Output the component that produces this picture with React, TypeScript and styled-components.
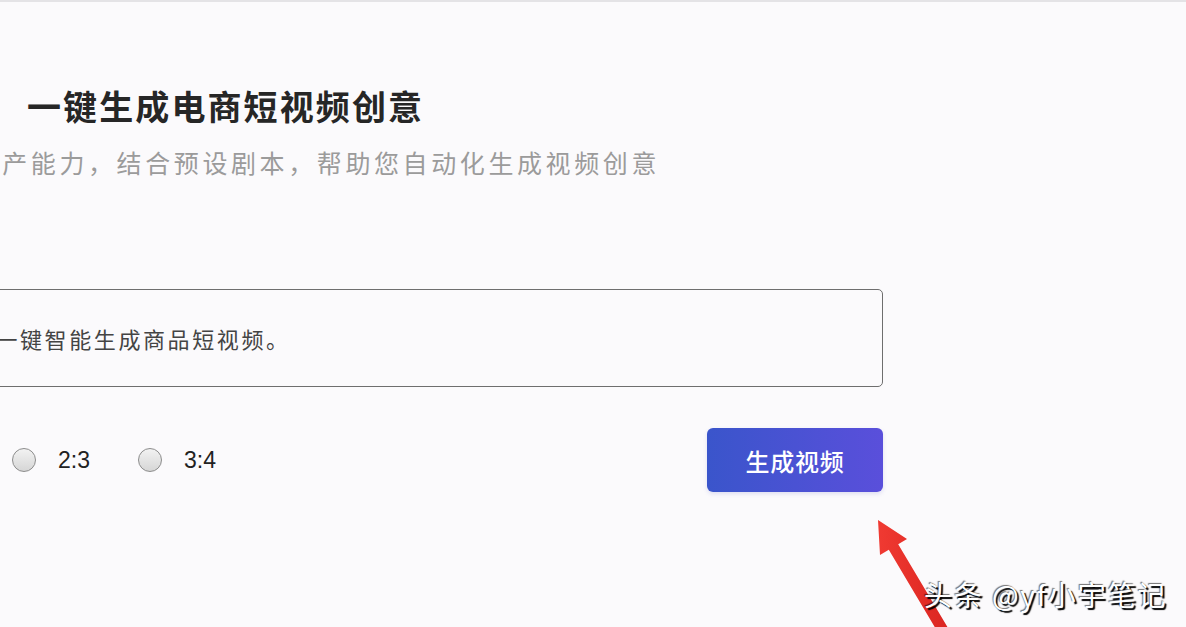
import React from "react";
import styled, { createGlobalStyle } from "styled-components";

const Global = createGlobalStyle`
  html, body { margin: 0; padding: 0; }
  body { font-family: "Liberation Sans", "Noto Sans CJK SC", sans-serif; }
`;

const Page = styled.div`
  position: relative;
  width: 100vw;
  height: 100vh;
  overflow: hidden;
  box-sizing: border-box;
  background: #fbfafc;
  border-top: 2px solid #e4e3e6;
`;

const Panel = styled.div`
  display: flex;
  flex-direction: column;
  margin-left: -260px;
  width: 1143px;
`;

const Title = styled.h1`
  margin: 83px 0 0 287px;
  font-family: "Noto Sans CJK SC", sans-serif;
  font-size: 34px;
  line-height: 41px;
  font-weight: 700;
  letter-spacing: 2.1px;
  color: #262626;
  white-space: nowrap;
`;

const Subtitle = styled.p`
  margin: 19px 0 0 62px;
  font-family: "Noto Sans CJK SC", sans-serif;
  font-size: 25px;
  line-height: 34px;
  letter-spacing: 3.6px;
  color: #9b9b9b;
  white-space: nowrap;
`;

const InputBox = styled.div`
  margin-top: 110px;
  height: 98px;
  box-sizing: border-box;
  border: 1px solid #6e6e6e;
  border-radius: 5px;
  display: flex;
  align-items: center;
  padding-left: 33px;
  font-family: "Noto Sans CJK SC", sans-serif;
  font-size: 22px;
  letter-spacing: 2.6px;
  color: #444;
  white-space: nowrap;
`;

const Row = styled.div`
  margin-top: 41px;
  display: flex;
  align-items: center;
  justify-content: space-between;
`;

const Options = styled.div`
  display: flex;
  align-items: center;
  margin-left: 20px;
`;

const Option = styled.label`
  width: 126px;
  display: flex;
  align-items: center;
  gap: 22px;
  font-size: 23px;
  color: #222;
`;

const Radio = styled.span`
  width: 24px;
  height: 24px;
  box-sizing: border-box;
  border-radius: 50%;
  border: 1.5px solid #8c8c8c;
  background: linear-gradient(180deg, #f2f2f2 0%, #d6d6d6 100%);
  flex: none;
`;

const Button = styled.button`
  width: 176px;
  height: 64px;
  border: none;
  border-radius: 6px;
  background: linear-gradient(90deg, #3a55cb 0%, #5a4fdb 100%);
  color: #fff;
  font-family: "Noto Sans CJK SC", sans-serif;
  font-size: 24px;
  font-weight: 500;
  letter-spacing: 0.8px;
  box-shadow: 0 2px 4px rgba(60, 70, 180, 0.15);
`;

const Arrow = styled.svg`
  position: absolute;
  left: 860px;
  top: 500px;
  width: 100px;
  height: 127px;
`;

const Watermark = styled.div`
  position: absolute;
  left: 924px;
  top: 574px;
  font-family: "Noto Sans CJK SC", sans-serif;
  font-size: 28px;
  line-height: 36px;
  letter-spacing: 1.9px;
  color: #fff;
  white-space: nowrap;
  text-shadow: 2px 2px 1px #000, -1px -1px 1px rgba(0, 0, 0, 0.55);
`;

const ratios = ["16:9", "1:1", "2:3", "3:4"];

export default function App() {
  return (
    <>
      <Global />
      <Page>
        <Panel>
          <Title>一键生成电商短视频创意</Title>
          <Subtitle>基于智能视频生产能力，结合预设剧本，帮助您自动化生成视频创意</Subtitle>
          <InputBox>输入商品卖点描述，一键智能生成商品短视频。</InputBox>
          <Row>
            <Options>
              {ratios.map((r) => (
                <Option key={r}>
                  <Radio />
                  {r}
                </Option>
              ))}
            </Options>
            <Button>生成视频</Button>
          </Row>
        </Panel>
        <Arrow viewBox="0 0 100 127">
          <defs>
            <linearGradient id="ag" x1="0" y1="0" x2="1" y2="0">
              <stop offset="0" stopColor="#f03a32" />
              <stop offset="1" stopColor="#d9231f" />
            </linearGradient>
          </defs>
          <polygon
            points="18,18 47,37 38.2,42.2 94.7,137.2 85.3,142.8 28.8,47.8 20,53"
            fill="url(#ag)"
          />
        </Arrow>
        <Watermark>头条 @yf小宇笔记</Watermark>
      </Page>
    </>
  );
}
